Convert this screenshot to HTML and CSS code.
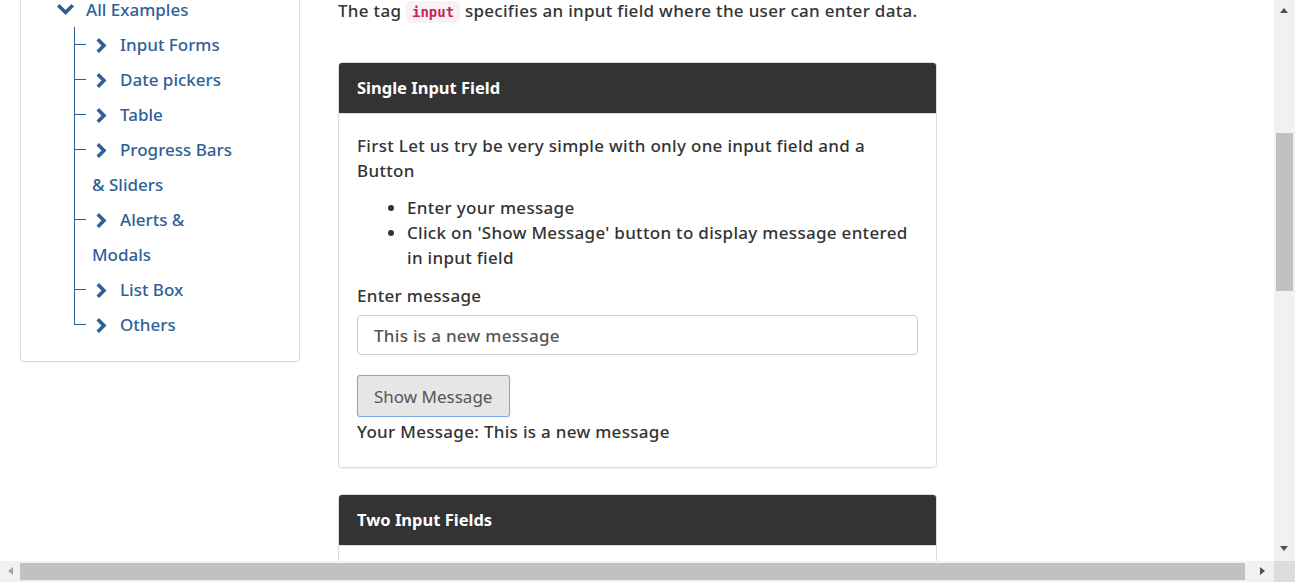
FILE: index.html
```html
<!DOCTYPE html>
<html lang="en">
<head>
<meta charset="utf-8">
<title>Simple Form Demo</title>
<link rel="stylesheet" href="styles.css">
</head>
<body>
<div class="page">
  <aside class="sidebar">
    <div class="side-card">
      <ul class="tree-root">
        <li class="root-item">
          <div class="root-row">
            <svg class="chev-down" viewBox="0 0 17 11" width="17" height="11"><polygon points="0,2.5 2.5,0 8.5,6 14.5,0 17,2.5 8.5,11" fill="currentColor"/></svg>
            <span>All Examples</span>
          </div>
          <ul class="tree">
            <li><svg class="chev-right" viewBox="0 0 12 15" width="12" height="15"><polygon points="1.5,2.5 4,0 11.5,7.5 4,15 1.5,12.5 6.5,7.5" fill="currentColor"/></svg>Input Forms</li>
            <li><svg class="chev-right" viewBox="0 0 12 15" width="12" height="15"><polygon points="1.5,2.5 4,0 11.5,7.5 4,15 1.5,12.5 6.5,7.5" fill="currentColor"/></svg>Date pickers</li>
            <li><svg class="chev-right" viewBox="0 0 12 15" width="12" height="15"><polygon points="1.5,2.5 4,0 11.5,7.5 4,15 1.5,12.5 6.5,7.5" fill="currentColor"/></svg>Table</li>
            <li><svg class="chev-right" viewBox="0 0 12 15" width="12" height="15"><polygon points="1.5,2.5 4,0 11.5,7.5 4,15 1.5,12.5 6.5,7.5" fill="currentColor"/></svg>Progress Bars &amp; Sliders</li>
            <li><svg class="chev-right" viewBox="0 0 12 15" width="12" height="15"><polygon points="1.5,2.5 4,0 11.5,7.5 4,15 1.5,12.5 6.5,7.5" fill="currentColor"/></svg>Alerts &amp; Modals</li>
            <li><svg class="chev-right" viewBox="0 0 12 15" width="12" height="15"><polygon points="1.5,2.5 4,0 11.5,7.5 4,15 1.5,12.5 6.5,7.5" fill="currentColor"/></svg>List Box</li>
            <li><svg class="chev-right" viewBox="0 0 12 15" width="12" height="15"><polygon points="1.5,2.5 4,0 11.5,7.5 4,15 1.5,12.5 6.5,7.5" fill="currentColor"/></svg>Others</li>
          </ul>
        </li>
      </ul>
    </div>
  </aside>

  <main class="content">
    <p class="intro">The tag <code>input</code> specifies an input field where the user can enter data.</p>

    <section class="card">
      <div class="card-header">Single Input Field</div>
      <div class="card-body">
        <p class="lead">First Let us try be very simple with only one input field and a Button</p>
        <ul class="steps">
          <li>Enter your message</li>
          <li>Click on 'Show Message' button to display message entered in input field</li>
        </ul>
        <label class="field-label" for="msg">Enter message</label>
        <input id="msg" class="text-input" type="text" value="This is a new message">
        <button class="btn" type="button">Show Message</button>
        <div class="result">Your Message: <span>This is a new message</span></div>
      </div>
    </section>

    <section class="card">
      <div class="card-header">Two Input Fields</div>
      <div class="card-body tall"></div>
    </section>
  </main>
</div>

<div class="vscroll">
  <span class="arrow-up"></span>
  <span class="vthumb"></span>
  <span class="arrow-down"></span>
</div>
<div class="hscroll">
  <span class="arrow-left"></span>
  <span class="hthumb"></span>
  <span class="arrow-right"></span>
</div>
<div class="scroll-corner"></div>
</body>
</html>
```

FILE: styles.css
```css
html, body {
  margin: 0;
  padding: 0;
  overflow: hidden;
  background: #fff;
}

body {
  font-family: "Noto Sans", "Open Sans", sans-serif;
  font-weight: 500;
  font-size: 17px;
  line-height: 25px;
  color: #333;
}

.page {
  display: flex;
  align-items: flex-start;
  gap: 38px;
  padding-left: 20px;
}

/* ---------- sidebar ---------- */
.sidebar {
  width: 280px;
  flex: none;
}

.side-card {
  margin-top: -41px;
  border: 1px solid #dcdcdc;
  border-radius: 4px;
  padding: 32px 0 19px 36px;
  box-shadow: 0 1px 1px rgba(0,0,0,0.05);
}

.tree-root,
.tree {
  list-style: none;
  margin: 0;
  padding: 0;
}

.root-item {
  color: #2f5f97;
  font-size: 17px;
}

.root-row {
  display: flex;
  align-items: center;
  height: 35px;
}

.chev-down {
  margin-right: 12px;
  color: #2f5f97;
}

.tree {
  margin-left: 17px;
  padding-left: 18px;
  width: 150px;
}

.tree li {
  position: relative;
  line-height: 35px;
  color: #2f5f97;
}

.tree li::before {
  content: "";
  position: absolute;
  left: -18px;
  top: 0;
  height: 100%;
  border-left: 1px solid #2f5f97;
}

.tree li::after {
  content: "";
  position: absolute;
  left: -18px;
  top: 17px;
  width: 12px;
  border-top: 1px solid #2f5f97;
}

.tree li:last-child::before {
  height: 18px;
}

.chev-right {
  vertical-align: -2px;
  margin-left: 3px;
  margin-right: 13px;
}

/* ---------- content ---------- */
.content {
  width: 599px;
  flex: none;
  letter-spacing: 0.3px;
}

.intro {
  margin: -2px 0 37px;
}

code {
  font-family: "DejaVu Sans Mono", "Liberation Mono", monospace;
  font-size: 14px;
  font-weight: 700;
  letter-spacing: 0;
  color: #c7254e;
  background: #f9f2f4;
  border-radius: 4px;
  padding: 3px 6px;
}

.card {
  border: 1px solid #dcdcdc;
  border-radius: 4px;
  margin-bottom: 26px;
  overflow: hidden;
  box-shadow: 0 1px 1px rgba(0,0,0,0.05);
}

.card-header {
  background: #333;
  color: #fff;
  font-weight: 700;
  font-size: 16.5px;
  letter-spacing: 0;
  line-height: 26px;
  padding: 12px 18px;
  border-bottom: 1px solid #ddd;
}

.card-body {
  padding: 19px 18px 23px;
}

.card-body.tall {
  height: 200px;
}

.lead {
  margin: 0 0 12px;
}

.steps {
  margin: 0 0 13px;
  padding-left: 50px;
}

.field-label {
  display: block;
  margin-bottom: 7px;
}

.text-input {
  display: block;
  box-sizing: border-box;
  width: 100%;
  height: 40px;
  padding: 0 16px;
  border: 1px solid #ccc;
  border-radius: 4px;
  font-family: inherit;
  font-weight: 500;
  font-size: 17px;
  letter-spacing: 0.3px;
  color: #555;
  margin-bottom: 20px;
}

.btn {
  display: block;
  box-sizing: border-box;
  height: 42px;
  width: 153px;
  padding: 0 16px;
  text-align: left;
  background: #e6e6e6;
  border: 1px solid #7aa7ea;
  border-radius: 3px;
  box-shadow: 0 0 1px #9dbff0;
  font-family: inherit;
  font-weight: 400;
  font-size: 17px;
  letter-spacing: 0;
  color: #555;
}

.result {
  margin-top: 2px;
}

/* ---------- fake scrollbars ---------- */
.vscroll {
  position: fixed;
  top: 0;
  right: 0;
  width: 21px;
  height: 561px;
  background: #f1f1f1;
}

.vthumb {
  position: absolute;
  left: 2px;
  top: 133px;
  width: 17px;
  height: 158px;
  background: #c1c1c1;
}

.arrow-up,
.arrow-down {
  position: absolute;
  left: 6px;
  width: 0;
  height: 0;
  border-left: 4.5px solid transparent;
  border-right: 4.5px solid transparent;
}

.arrow-up {
  top: 8px;
  border-bottom: 5px solid #505050;
}

.arrow-down {
  top: 546px;
  border-top: 5px solid #505050;
}

.hscroll {
  position: fixed;
  left: 0;
  bottom: 0;
  width: 1274px;
  height: 21px;
  background: #f1f1f1;
}

.hthumb {
  position: absolute;
  top: 2px;
  left: 20px;
  width: 1225px;
  height: 17px;
  background: #c1c1c1;
}

.arrow-left,
.arrow-right {
  position: absolute;
  top: 6px;
  width: 0;
  height: 0;
  border-top: 4.5px solid transparent;
  border-bottom: 4.5px solid transparent;
}

.arrow-left {
  left: 8px;
  border-right: 5px solid #a3a3a3;
}

.arrow-right {
  left: 1260px;
  border-left: 5px solid #505050;
}

.scroll-corner {
  position: fixed;
  right: 0;
  bottom: 0;
  width: 21px;
  height: 21px;
  background: #dcdcdc;
}
```
